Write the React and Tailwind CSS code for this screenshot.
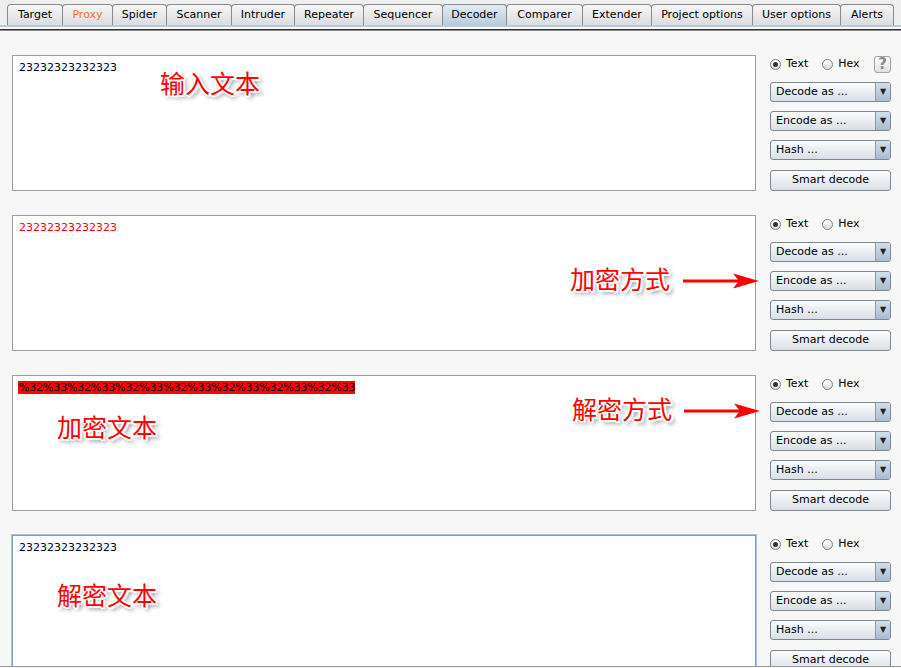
import React from "react";

const tabs = [
  ["Target", 56],
  ["Proxy", 51],
  ["Spider", 55],
  ["Scanner", 66],
  ["Intruder", 64],
  ["Repeater", 70],
  ["Sequencer", 80],
  ["Decoder", 65],
  ["Comparer", 77],
  ["Extender", 70],
  ["Project options", 102],
  ["User options", 89],
  ["Alerts", 54],
];

const shadow =
  "[text-shadow:1px_1px_0_#fff,-1px_-1px_0_#fff,1px_-1px_0_#fff,-1px_1px_0_#fff,2px_0_0_#fff,-2px_0_0_#fff,0_2px_0_#fff,0_-2px_0_#fff,2px_2px_1px_#fff,3px_3px_4px_rgba(0,0,0,0.6)]";

function Note({ children, className }) {
  return (
    <div
      className={
        "absolute text-[25px] leading-none text-[#ff0000] font-['Noto_Sans_CJK_SC',sans-serif] whitespace-nowrap " +
        shadow +
        " " +
        className
      }
    >
      {children}
    </div>
  );
}

function Arrow({ className }) {
  return (
    <svg className={"absolute " + className} width="76" height="16" viewBox="0 0 76 16">
      <line x1="0" y1="8" x2="60" y2="8" stroke="#ff0000" strokeWidth="3" />
      <polygon points="50,0.5 76,8 50,15.5 56,8" fill="#ff0000" />
    </svg>
  );
}

function Radio({ checked, label }) {
  return (
    <div className="flex items-center">
      <div className="w-[11px] h-[11px] rounded-full border border-[#7d7d7d] bg-linear-to-b from-white to-[#dcdcdc] flex items-center justify-center">
        {checked && <div className="w-[5px] h-[5px] rounded-full bg-[#333]" />}
      </div>
      <span className="ml-[5px]">{label}</span>
    </div>
  );
}

function Drop({ label }) {
  return (
    <div className="h-[20px] flex rounded-[3px] border border-[#7b8794] bg-linear-to-b from-[#fbfcfd] to-[#d9dfe6] overflow-hidden">
      <div className="flex-1 pl-[5px] flex items-center">{label}</div>
      <div className="w-[15px] border-l border-[#8c99a7] bg-linear-to-b from-[#d3dfeb] to-[#a9bdd1] flex items-center justify-center text-[8px] text-[#222]">
        ▼
      </div>
    </div>
  );
}

function Controls({ help }) {
  return (
    <div className="w-[121px] flex flex-col">
      <div className="h-[18px] flex items-center">
        <Radio checked label="Text" />
        <div className="ml-[14px]">
          <Radio label="Hex" />
        </div>
        {help && (
          <div className="ml-auto w-[17px] h-[17px] rounded-[3px] border border-[#a3a3a3] bg-linear-to-b from-white to-[#e0e0e0] flex items-center justify-center text-[15px] font-bold text-[#8a8a8a] leading-none">
            ?
          </div>
        )}
      </div>
      <div className="mt-[9px] flex flex-col gap-[9px]">
        <Drop label="Decode as ..." />
        <Drop label="Encode as ..." />
        <Drop label="Hash ..." />
        <div className="mt-px h-[21px] rounded-[3px] border border-[#7b8794] bg-linear-to-b from-[#fbfcfd] to-[#dbe0e6] flex items-center justify-center">
          Smart decode
        </div>
      </div>
    </div>
  );
}

function Section({ children, focused, overlays, help }) {
  return (
    <div className="relative flex shrink-0">
      <div
        className={
          "w-[744px] h-[136px] bg-white border pl-[6px] pt-[5px] leading-[14px] " +
          (focused
            ? "border-[#7b9fc7] ring-1 ring-[#a9c2dc]"
            : "border-[#9b9bab]")
        }
      >
        {children}
      </div>
      <div className="ml-[14px]">
        <Controls help={help} />
      </div>
      {overlays}
    </div>
  );
}

export default function App() {
  return (
    <div className="w-[901px] h-[668px] overflow-hidden bg-[#f7f7f7] font-['DejaVu_Sans',sans-serif] text-[11px] text-black flex flex-col">
      <div className="bg-[#efefef] pt-[4px] pl-[7px] flex shrink-0">
        {tabs.map(([t, w], i) => {
          const sel = t === "Decoder";
          return (
            <div
              key={t}
              style={{ width: w }}
              className={
                "h-[21px] pt-px flex items-center justify-center border border-b-0 border-[#8a8a8a] rounded-t-[4px] " +
                (i > 0 ? "-ml-px " : "") +
                (sel
                  ? "bg-linear-to-b from-[#e3ebf3] to-[#b9cbdc] relative z-10"
                  : "bg-linear-to-b from-[#f7f7f8] to-[#dcdce0]") +
                (t === "Proxy" ? " text-[#ff6a3d]" : "")
              }
            >
              {t}
            </div>
          );
        })}
      </div>
      <div className="h-[2px] bg-[#b8cbdd] shrink-0" />
      <div className="h-[2px] bg-[#fafafa] shrink-0" />
      <div className="h-px bg-[#2e2e2e] shrink-0" />
      <div className="h-px bg-[#8d8d8d] shrink-0" />
      <div className="flex-1 overflow-hidden pl-[12px] pt-[24px] flex flex-col gap-[24px] border-b border-[#9a9a9a]">
        <Section
          help
          overlays={<Note className="left-[148px] top-[15px]">输入文本</Note>}
        >
          23232323232323
        </Section>
        <Section
          overlays={
            <>
              <Note className="left-[558px] top-[51px]">加密方式</Note>
              <Arrow className="left-[671px] top-[58px]" />
            </>
          }
        >
          <span className="text-[#ff0000]">23232323232323</span>
        </Section>
        <Section
          overlays={
            <>
              <Note className="left-[560px] top-[21px]">解密方式</Note>
              <Arrow className="left-[672px] top-[28px]" />
              <Note className="left-[45px] top-[39px]">加密文本</Note>
            </>
          }
        >
          <span className="bg-[#ff0000] text-black -ml-px pl-px tracking-[-0.14px]">
            %32%33%32%33%32%33%32%33%32%33%32%33%32%33
          </span>
        </Section>
        <Section
          focused
          overlays={<Note className="left-[45px] top-[47px]">解密文本</Note>}
        >
          23232323232323
        </Section>
      </div>
      <div className="h-px shrink-0 bg-[#f7f7f7]" />
    </div>
  );
}
